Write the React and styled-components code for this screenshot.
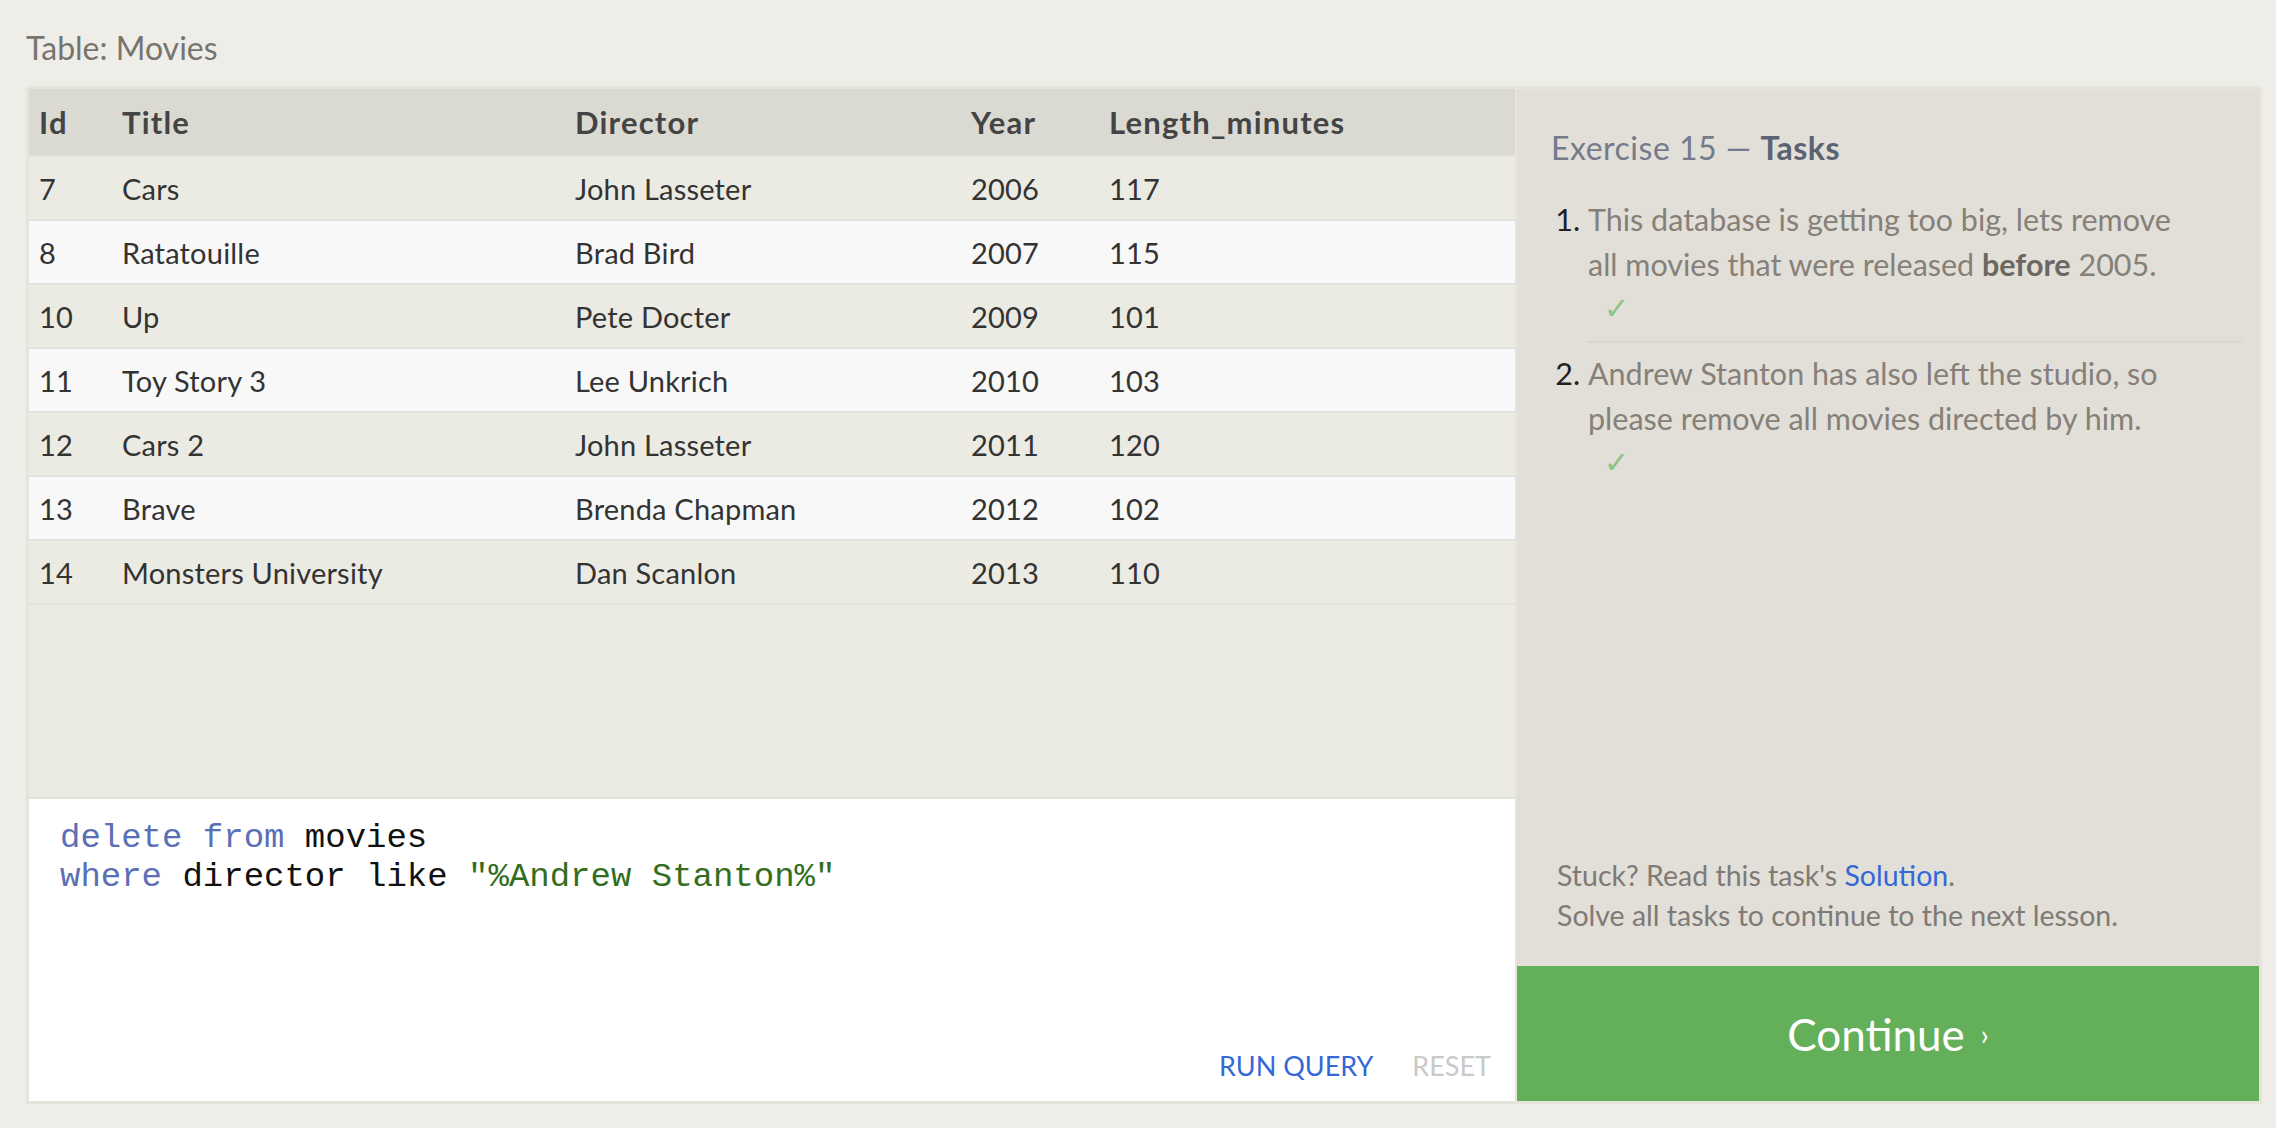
import React from 'react';
import styled, { createGlobalStyle } from 'styled-components';

const GlobalStyle = createGlobalStyle`
  html, body {
    margin: 0;
    padding: 0;
    background: #efede7;
  }
  body {
    font-family: 'Lato', 'Open Sans', sans-serif;
    color: #333;
  }
`;

const Page = styled.div`
  padding: 28px 14px 24px 26px;
`;

const Caption = styled.div`
  font-size: 32px;
  line-height: 40px;
  color: #777470;
  margin-bottom: 18px;
`;

const Frame = styled.div`
  display: flex;
  width: 2236px;
  height: 1018px;
  box-sizing: border-box;
  border: 3px solid #e5e4dd;
`;

const LeftPanel = styled.div`
  flex: 0 0 1486px;
  display: flex;
  flex-direction: column;
  border-right: 2px solid #e5e4de;
`;

const TableArea = styled.div`
  flex: 1;
  background: #ebeae3;
`;

const Row = styled.div`
  display: grid;
  grid-template-columns: 83px 453px 396px 138px 1fr;
  align-items: center;
  height: ${p => (p.$head ? 66 : 62)}px;
  border-bottom: 2px solid #e3e2dd;
  background: ${p => (p.$head ? '#dadad2' : p.$alt ? '#f8f8f8' : '#ebeae3')};
  font-size: ${p => (p.$head ? 31 : 29)}px;
  letter-spacing: ${p => (p.$head ? '1.2px' : '0.2px')};
  font-weight: ${p => (p.$head ? 700 : 400)};
  color: ${p => (p.$head ? '#444' : '#333')};
`;

const Cell = styled.div`
  padding-left: 10px;
  white-space: nowrap;
`;

const Editor = styled.div`
  height: 302px;
  border-top: 2px solid #e4e3dd;
  background: #fff;
  display: flex;
  flex-direction: column;
`;

const Code = styled.pre`
  flex: 1;
  margin: 0;
  padding: 20px 0 0 31px;
  font-family: 'Liberation Mono', 'Courier New', monospace;
  font-size: 34px;
  line-height: 39px;
  color: #111;
`;

const Keyword = styled.span`
  color: #5a70b5;
`;

const Str = styled.span`
  color: #336d1e;
`;

const Actions = styled.div`
  display: flex;
  justify-content: flex-end;
  gap: 39px;
  padding: 0 24px 20px 0;
`;

const ActionButton = styled.span`
  font-size: 27px;
  line-height: 30px;
  color: ${p => (p.$muted ? '#c9c9c9' : '#3468d6')};
`;

const RightPanel = styled.div`
  flex: 1;
  display: flex;
  flex-direction: column;
  background: #e1dfd8;
`;

const Heading = styled.div`
  padding: 39px 0 0 34px;
  font-size: 32px;
  letter-spacing: 0.5px;
  line-height: 40px;
  color: #737b8c;

  b {
    font-weight: 700;
    color: #5b6373;
  }
`;

const TaskList = styled.ol`
  margin: 29px 17px 0 0;
  padding: 0 0 0 71px;
  font-size: 30.5px;
  line-height: 45px;
`;

const Task = styled.li`
  color: #868079;
  padding: 0 40px 10px 0;
  margin-bottom: 8px;
  border-bottom: ${p => (p.$last ? 'none' : '2px solid #d8d6cd')};

  &::marker {
    color: #222;
  }

  b {
    color: #6c6762;
  }
`;

const Check = styled.div`
  color: #8cc485;
  padding-left: 16px;
  font-family: 'DejaVu Sans', sans-serif;
  font-size: 30px;
  line-height: 44px;
`;

const Spacer = styled.div`
  flex: 1;
`;

const Footer = styled.div`
  padding: 0 0 31px 40px;
  font-size: 28.5px;
  line-height: 40px;
  color: #7f7a76;

  a {
    color: #3468d6;
    text-decoration: none;
  }
`;

const ContinueButton = styled.div`
  height: 135px;
  background: #64b05a;
  color: #fff;
  display: flex;
  align-items: center;
  justify-content: center;
  gap: 16px;
  font-size: 44px;

  span {
    font-size: 28px;
  }
`;

const movies = [
  [7, 'Cars', 'John Lasseter', 2006, 117],
  [8, 'Ratatouille', 'Brad Bird', 2007, 115],
  [10, 'Up', 'Pete Docter', 2009, 101],
  [11, 'Toy Story 3', 'Lee Unkrich', 2010, 103],
  [12, 'Cars 2', 'John Lasseter', 2011, 120],
  [13, 'Brave', 'Brenda Chapman', 2012, 102],
  [14, 'Monsters University', 'Dan Scanlon', 2013, 110],
];

const columns = ['Id', 'Title', 'Director', 'Year', 'Length_minutes'];

const App = () => {
  return (
    <Page>
      <GlobalStyle />
      <Caption>Table: Movies</Caption>
      <Frame>
        <LeftPanel>
          <TableArea>
            <Row $head>
              {columns.map(c => (
                <Cell key={c}>{c}</Cell>
              ))}
            </Row>
            {movies.map((m, i) => (
              <Row key={m[0]} $alt={i % 2 === 1}>
                {m.map((v, j) => (
                  <Cell key={j}>{v}</Cell>
                ))}
              </Row>
            ))}
          </TableArea>
          <Editor>
            <Code>
              <Keyword>delete</Keyword> <Keyword>from</Keyword> movies{'\n'}
              <Keyword>where</Keyword> director like <Str>"%Andrew Stanton%"</Str>
            </Code>
            <Actions>
              <ActionButton>RUN QUERY</ActionButton>
              <ActionButton $muted>RESET</ActionButton>
            </Actions>
          </Editor>
        </LeftPanel>
        <RightPanel>
          <Heading>
            Exercise 15 — <b>Tasks</b>
          </Heading>
          <TaskList>
            <Task>
              This database is getting too big, lets remove all movies that were released <b>before</b> 2005.
              <Check>✓</Check>
            </Task>
            <Task $last>
              Andrew Stanton has also left the studio, so please remove all movies directed by him.
              <Check>✓</Check>
            </Task>
          </TaskList>
          <Spacer />
          <Footer>
            Stuck? Read this task's <a href="#">Solution</a>.<br />
            Solve all tasks to continue to the next lesson.
          </Footer>
          <ContinueButton>
            Continue <span>›</span>
          </ContinueButton>
        </RightPanel>
      </Frame>
    </Page>
  );
};

export default App;
